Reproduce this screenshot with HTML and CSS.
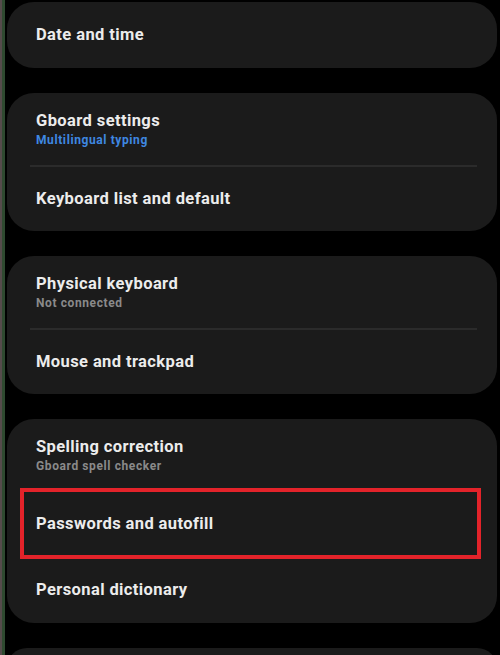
FILE: index.html
```html
<!DOCTYPE html>
<html lang="en">
<head>
<meta charset="utf-8">
<title>Settings</title>
<link rel="stylesheet" href="styles.css">
</head>
<body>
<div class="screen">
  <div class="edge"></div>
  <main class="list">
    <section class="card">
      <div class="row"><span class="title">Date and time</span></div>
    </section>

    <section class="card">
      <div class="row two">
        <span class="title">Gboard settings</span>
        <span class="sub accent">Multilingual typing</span>
      </div>
      <div class="divider"></div>
      <div class="row"><span class="title">Keyboard list and default</span></div>
    </section>

    <section class="card">
      <div class="row two">
        <span class="title">Physical keyboard</span>
        <span class="sub">Not connected</span>
      </div>
      <div class="divider"></div>
      <div class="row"><span class="title">Mouse and trackpad</span></div>
    </section>

    <section class="card">
      <div class="row two">
        <span class="title">Spelling correction</span>
        <span class="sub">Gboard spell checker</span>
      </div>
      <div class="row highlighted">
        <span class="title">Passwords and autofill</span>
        <span class="mark"></span>
      </div>
      <div class="row"><span class="title">Personal dictionary</span></div>
    </section>

    <section class="card peek"></section>
  </main>
</div>
</body>
</html>
```

FILE: styles.css
```css
html, body {
  margin: 0;
  padding: 0;
  background: #000;
  width: 500px;
  height: 655px;
  overflow: hidden;
}

.screen {
  display: flex;
  height: 655px;
  overflow: hidden;
  font-family: Roboto, "Noto Sans", sans-serif;
}

/* thin window edge on the left */
.edge {
  width: 5px;
  flex: none;
  background: linear-gradient(to right, #554b4b 0, #554b4b 2px, #2f4a30 2px, #2f4a30 5px);
}

.list {
  flex: 1;
  display: flex;
  flex-direction: column;
  gap: 25px;
  padding: 2px 3px 0 2px;
  overflow: hidden;
}

.card {
  background: #1b1b1b;
  border-radius: 27px;
  flex: none;
}

.card.peek {
  height: 40px;
}

.row {
  position: relative;
  height: 66px;
  display: flex;
  flex-direction: column;
  justify-content: center;
  padding-left: 29px;
}

.row.two {
  height: 72px;
  justify-content: flex-start;
  padding-top: 18px;
  box-sizing: border-box;
}

.divider + .row {
  height: 64px;
}

.title {
  color: #ececec;
  font-size: 16.5px;
  font-weight: 700;
  line-height: 20px;
  letter-spacing: 0.4px;
}

.sub {
  color: #8a8a8a;
  font-size: 12px;
  font-weight: 700;
  line-height: 16px;
  letter-spacing: 0.6px;
  margin-top: 1px;
}

.sub.accent {
  color: #3f88e2;
}

.divider {
  height: 2px;
  background: #2b2b2b;
  margin: 0 20px 0 23px;
}

/* red outline drawn over the highlighted row */
.mark {
  position: absolute;
  left: 13px;
  right: 16px;
  top: -3px;
  bottom: -2px;
  border: 4px solid #e3232a;
  box-sizing: border-box;
}
```
